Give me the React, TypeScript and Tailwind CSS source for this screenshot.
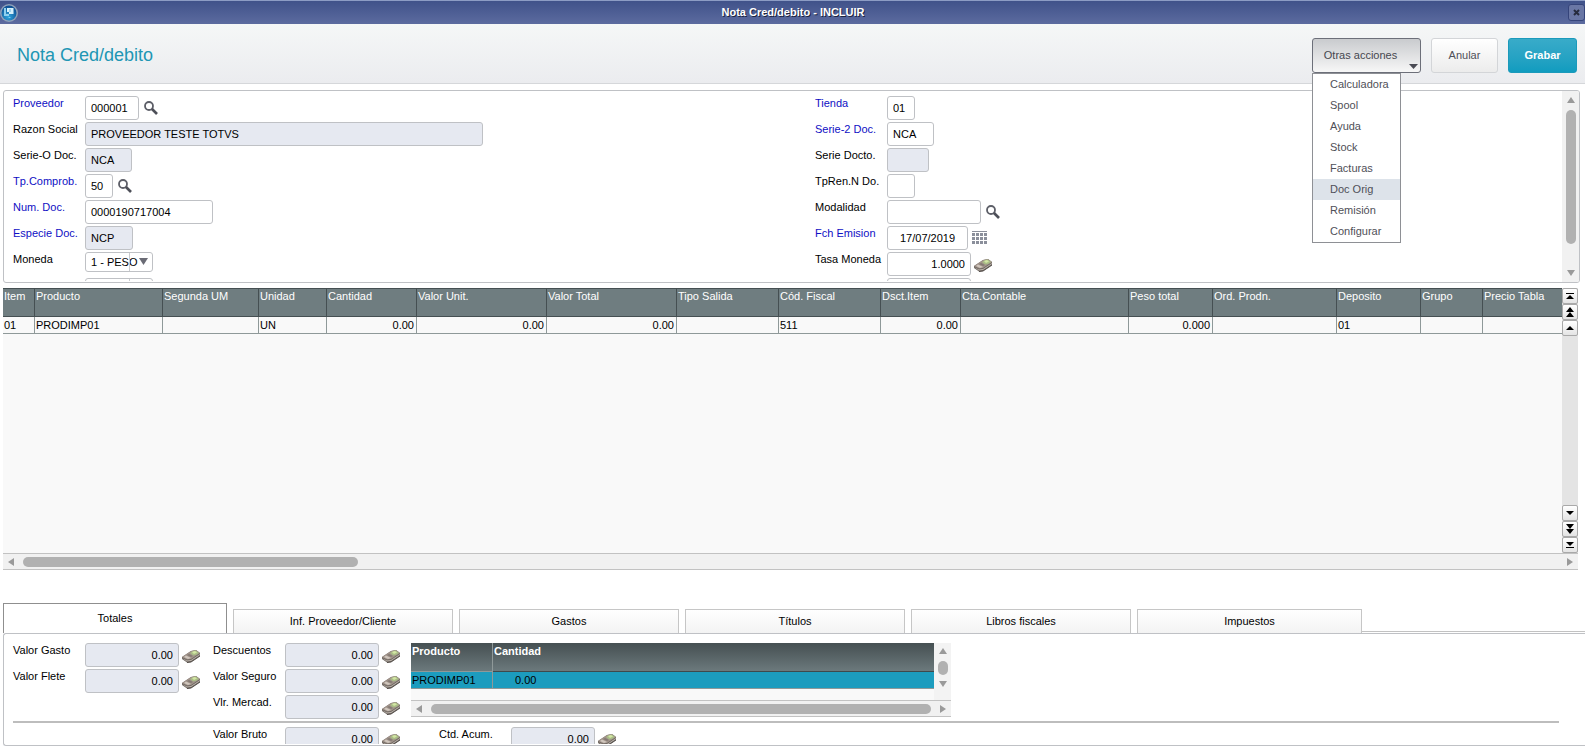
import { useState } from 'react';

const menuOptions = [
  'Calculadora',
  'Spool',
  'Ayuda',
  'Stock',
  'Facturas',
  'Doc Orig',
  'Remisión',
  'Configurar',
];

const tabs = ['Totales', 'Inf. Proveedor/Cliente', 'Gastos', 'Títulos', 'Libros fiscales', 'Impuestos'];

const columns = [
  { title: 'Item', width: 32, value: '01' },
  { title: 'Producto', width: 128, value: 'PRODIMP01' },
  { title: 'Segunda UM', width: 96, value: '' },
  { title: 'Unidad', width: 68, value: 'UN' },
  { title: 'Cantidad', width: 90, value: '0.00', number: true },
  { title: 'Valor Unit.', width: 130, value: '0.00', number: true },
  { title: 'Valor Total', width: 130, value: '0.00', number: true },
  { title: 'Tipo Salida', width: 102, value: '' },
  { title: 'Cód. Fiscal', width: 102, value: '511' },
  { title: 'Dsct.Item', width: 80, value: '0.00', number: true },
  { title: 'Cta.Contable', width: 168, value: '' },
  { title: 'Peso total', width: 84, value: '0.000', number: true },
  { title: 'Ord. Prodn.', width: 124, value: '' },
  { title: 'Deposito', width: 84, value: '01' },
  { title: 'Grupo', width: 62, value: '' },
  { title: 'Precio Tabla', width: 79, value: '' },
];

type FieldProps = {
  id: string;
  label: string;
  value?: string;
  width: string;
  required?: boolean;
  disabled?: boolean;
  align?: string;
  icon?: 'search' | 'calendar' | 'money';
};

function SearchIcon() {
  return (
    <svg width="14" height="14" viewBox="0 0 14 14" fill="none">
      <circle cx="5" cy="5" r="4" stroke="#5d5f68" strokeWidth="1.8" />
      <path d="M8 8l5 5" stroke="#4d4f58" strokeWidth="2.6" />
    </svg>
  );
}

function CalendarIcon() {
  return (
    <svg width="16" height="14" viewBox="0 0 16 14" fill="#8b8f9b">
      <path d="M0 0h15v1H0z" />
      {[2, 6, 10].map((y) => (
        <path key={y} d={`M0 ${y}h3v3H0zM4 ${y}h3v3H4zM8 ${y}h3v3H8zM12 ${y}h3v3h-3z`} />
      ))}
    </svg>
  );
}

function MoneyIcon() {
  return (
    <svg width="18" height="14" viewBox="0 0 18 14">
      <path d="M0 8l9-6 5-1 4 3v3l-9 6-4 .5L0 10z" fill="#6f6761" />
      <path d="M0 8l9-6 5-1 4 3-9 6-4 .5z" fill="#a0938a" />
      <path d="M8 4l3-2 3-.5 3 2.500-3 2-3 .5z" fill="#a9bd86" />
      <path d="M10 3l3-1 2 1.500-3 1.500z" fill="#d3e6a4" />
      <path d="M2 8l2-1.500 5 2.500-3 1z" fill="#d0c6bd" />
      <path d="M5 6l2-1 4 2-2 1z" fill="#857a73" />
      <path d="M0 9l5 2.500L9 11l9-6v1l-9 6-4 .5z" fill="#beb6ae" />
      <path d="M5 13l4-.5 9-6v1l-9 6-4 .5z" fill="#504a46" />
    </svg>
  );
}

function Logo() {
  return (
    <svg width="18" height="18" viewBox="0 0 18 18">
      <defs>
        <radialGradient id="logo" cx="45%" cy="75%" r="70%">
          <stop offset="0" stopColor="#2fa5dc" />
          <stop offset="1" stopColor="#0d4f93" />
        </radialGradient>
      </defs>
      <circle cx="9" cy="9" r="9" fill="#8fa0b8" />
      <circle cx="9" cy="9" r="7.500" fill="url(#logo)" />
      <path d="M4 4h2v6h3v2H4z" fill="#8fd0ee" />
      <path d="M7 4h6.500v6H9V8H7z" fill="#d4f0fb" />
      <path d="M9.500 5h1v3h-1z" fill="#5fb4de" />
      <path d="M8 14l1.500-1 1.500 1z" fill="#8fdcf7" />
    </svg>
  );
}

function Field({ id, label, value = '', width, required, disabled, align = 'text-left', icon }: FieldProps) {
  const [text, setText] = useState(value);

  return (
    <div className="flex h-[26px] items-start">
      <label htmlFor={id} className={`w-[72px] shrink-0 whitespace-nowrap leading-[14px] ${required ? 'text-[#0f0fc4]' : 'text-black'}`}>
        {label}
      </label>
      <input
        id={id}
        type="text"
        value={text}
        readOnly={disabled}
        onChange={(e) => setText(e.target.value)}
        className={`h-6 rounded-[3px] border border-[#bfc1c5] px-[5px] pb-px text-black outline-none ${width} ${align} ${disabled ? 'bg-[#e6e9f1]' : 'bg-white'}`}
      />
      {icon && (
        <button type="button" aria-label={`${label} ${icon}`} className={`flex h-6 items-center ${icon === 'search' ? 'pb-px pl-[5px]' : icon === 'calendar' ? 'pl-1' : 'pl-[3px] pt-[2px]'}`}>
          {icon === 'search' && <SearchIcon />}
          {icon === 'calendar' && <CalendarIcon />}
          {icon === 'money' && <MoneyIcon />}
        </button>
      )}
    </div>
  );
}

function SelectBox({ id, label, value }: { id: string; label: string; value: string }) {
  return (
    <div className="flex h-[26px] items-start">
      <label htmlFor={id} className="w-[72px] shrink-0 leading-[14px]">{label}</label>
      <div className="relative">
        <select id={id} className="h-5 w-[68px] appearance-none rounded-[3px] border border-[#bfc1c5] bg-white pl-[5px] leading-[18px] outline-none">
          <option>{value}</option>
        </select>
        <span className="pointer-events-none absolute left-11 top-px h-[18px] border-l border-[#c9cbcf]" />
        <svg className="pointer-events-none absolute right-[5px] top-[6px]" width="9" height="7" viewBox="0 0 9 7">
          <path d="M0 0h9L4.500 7z" fill="#6a6b75" />
        </svg>
      </div>
    </div>
  );
}

function Arrow({ dir }: { dir: 'up' | 'down' | 'left' | 'right' }) {
  const paths = {
    up: 'M0 7L4 1l4 6z',
    down: 'M0 1l4 6 4-6z',
    left: 'M7 0L1 4l6 4z',
    right: 'M1 0l6 4-6 4z',
  };
  return (
    <svg width="8" height="8" viewBox="0 0 8 8">
      <path d={paths[dir]} fill="#9a9a9a" />
    </svg>
  );
}

function StepButton({ label, d }: { label: string; d: string }) {
  return (
    <button type="button" aria-label={label} className="flex h-4 w-4 items-center justify-center rounded-[2px] border border-[#a9a9a9] bg-linear-to-b from-white to-[#e4e4e4]">
      <svg width="10" height="10" viewBox="0 0 10 10">
        <path d={d} fill="#000" />
      </svg>
    </button>
  );
}

export default function App() {
  const [open, setOpen] = useState(true);
  const [selected, setSelected] = useState('Doc Orig');
  const [activeTab, setActiveTab] = useState('Totales');

  return (
    <div className="min-h-[750px] overflow-hidden bg-white font-['Liberation_Sans',Arial,sans-serif] text-[11px] text-black">
      <div className="flex h-6 items-center border-t border-[#8c9cc4] bg-linear-to-b from-[#40528a] to-[#5c6b9f]">
        <Logo />
        <h1 className="flex-1 pb-px text-center font-bold text-white [text-shadow:1px_1px_0_#1d2440]">Nota Cred/debito - INCLUIR</h1>
        <button type="button" aria-label="Cerrar" className="flex h-[17px] w-[17px] items-center justify-center rounded-[3px] border border-[#35447a] bg-[#6a77a5]">
          <svg width="7" height="7" viewBox="0 0 7 7">
            <path d="M1 1l5 5M6 1L1 6" stroke="#262b3d" strokeWidth="2" />
          </svg>
        </button>
      </div>

      <header className="flex h-[60px] items-center justify-between border-b border-[#d5d7da] bg-linear-to-b from-[#f5f7f7] to-[#ebecef] pl-[17px] pr-2 pt-[3px]">
        <h2 className="text-lg text-[#2196b4]">Nota Cred/debito</h2>
        <div className="flex gap-[10px]">
          <div className="relative">
            <button
              type="button"
              onClick={() => setOpen(!open)}
              className="relative h-[35px] w-[109px] rounded-[3px] border border-[#6c6f79] bg-linear-to-b from-[#c9cbce] to-[#f7f7f7] pr-3 text-[#46474f]"
            >
              Otras acciones
              <svg className="absolute bottom-[3px] right-[2px]" width="9" height="5" viewBox="0 0 9 5">
                <path d="M0 0h9L4.500 5z" fill="#4a4b54" />
              </svg>
            </button>
            {open && (
              <ul className="absolute left-0 top-[35px] z-10 w-[89px] border border-[#8e9095] bg-white text-[#4f5058]">
                {menuOptions.map((option) => (
                  <li key={option}>
                    <button
                      type="button"
                      onClick={() => setSelected(option)}
                      className={`block h-[21px] w-full pl-[17px] text-left ${option === selected ? 'bg-[#dde3ea]' : ''}`}
                    >
                      {option}
                    </button>
                  </li>
                ))}
              </ul>
            )}
          </div>
          <button type="button" className="h-[35px] w-[67px] rounded-[3px] border border-[#d3d5d8] bg-linear-to-b from-white to-[#ececec] text-[#4f5058]">
            Anular
          </button>
          <button type="button" className="h-[35px] w-[69px] rounded-[3px] border border-[#1b9abb] bg-linear-to-b from-[#38abc9] to-[#109cbf] font-bold text-white">
            Grabar
          </button>
        </div>
      </header>

      <section className="ml-[3px] mr-[5px] mt-[6px] flex h-[193px] overflow-hidden rounded-[3px] border border-[#bfc1c5]">
        <div className="mb-px grid flex-1 grid-cols-[802px_1fr] overflow-hidden pl-[9px] pt-[5px]">
          <div>
            <Field id="proveedor" label="Proveedor" value="000001" width="w-[54px]" required icon="search" />
            <Field id="razon" label="Razon Social" value="PROVEEDOR TESTE TOTVS" width="w-[398px]" disabled />
            <Field id="serieO" label="Serie-O Doc." value="NCA" width="w-[47px]" disabled />
            <Field id="comprob" label="Tp.Comprob." value="50" width="w-[28px]" required icon="search" />
            <Field id="numDoc" label="Num. Doc." value="0000190717004" width="w-[128px]" required />
            <Field id="especie" label="Especie Doc." value="NCP" width="w-[48px]" required disabled />
            <SelectBox id="moneda" label="Moneda" value="1 - PESO" />
            <SelectBox id="extra" label="" value="" />
          </div>
          <div>
            <Field id="tienda" label="Tienda" value="01" width="w-[28px]" required />
            <Field id="serie2" label="Serie-2 Doc." value="NCA" width="w-[47px]" required />
            <Field id="serieDocto" label="Serie Docto." width="w-[42px]" disabled />
            <Field id="tpRen" label="TpRen.N Do." width="w-[28px]" />
            <Field id="modalidad" label="Modalidad" width="w-[94px]" icon="search" />
            <Field id="emision" label="Fch Emision" value="17/07/2019" width="w-[81px]" align="text-center" required icon="calendar" />
            <Field id="tasa" label="Tasa Moneda" value="1.0000" width="w-[84px]" align="text-right" icon="money" />
            <Field id="tasa2" label="" width="w-[84px]" />
          </div>
        </div>
        <div className="flex w-[17px] flex-col items-center gap-[6px] bg-[#f1f1f1] py-[5px]">
          <Arrow dir="up" />
          <div className="h-[134px] w-[10px] rounded-full bg-[#b1b1b1]" />
          <div className="mt-auto">
            <Arrow dir="down" />
          </div>
        </div>
      </section>

      <section className="ml-[3px] mr-[7px] mt-[5px]">
        <div className="flex h-[265px]">
          <div className="flex-1 overflow-hidden bg-[#f9f9f9]">
            <table className="w-full table-fixed border-separate border-spacing-0">
              <colgroup>
                {columns.map((col) => (
                  <col key={col.title} style={{ width: col.width }} />
                ))}
              </colgroup>
              <thead>
                <tr className="h-[29px] bg-[#6f7d80] text-left align-top text-white">
                  {columns.map((col) => (
                    <th key={col.title} className="whitespace-nowrap border-b border-r border-t border-[#454f52] pl-px pt-px font-normal leading-[13px] last:border-r-0">
                      {col.title}
                    </th>
                  ))}
                </tr>
              </thead>
              <tbody>
                <tr className="h-[17px]">
                  {columns.map((col) => (
                    <td key={col.title} className={`h-[17px] whitespace-nowrap border-b border-r border-[#8f9999] pl-px pr-[2px] leading-4 last:border-r-0 ${col.number ? 'text-right' : 'text-left'}`}>
                      {col.value}
                    </td>
                  ))}
                </tr>
              </tbody>
            </table>
          </div>
          <div className="flex w-4 flex-col bg-[#e4e4e4]">
            <StepButton label="Primero" d="M1 2h8v1H1zM5 4l4 4H1z" />
            <StepButton label="Página anterior" d="M5 0l4 5H1zM5 5l4 5H1z" />
            <StepButton label="Anterior" d="M5 3l4 4H1z" />
            <div className="flex-1" />
            <StepButton label="Siguiente" d="M5 7l4-4H1z" />
            <StepButton label="Página siguiente" d="M5 5l4-5H1zM5 10l4-5H1z" />
            <StepButton label="Último" d="M5 6l4-4H1zM1 7h8v1H1z" />
          </div>
        </div>
        <div className="flex h-[17px] items-center gap-2 border-y border-[#c2c2c2] bg-[#f1f1f1] px-1">
          <Arrow dir="left" />
          <div className="h-[10px] w-[335px] rounded-full bg-[#b1b1b1]" />
          <div className="ml-auto flex">
            <Arrow dir="right" />
          </div>
        </div>
      </section>

      <div role="tablist" className="ml-[3px] mt-[33px] flex h-[30px] items-end">
        {tabs.map((tab) => (
          <button
            key={tab}
            type="button"
            role="tab"
            aria-selected={tab === activeTab}
            onClick={() => setActiveTab(tab)}
            className={`mr-[6px] shrink-0 border border-b-0 last-of-type:mr-0 last-of-type:w-[225px] ${
              tab === activeTab ? 'h-[30px] w-[224px] border-[#8f8f8f] bg-white' : 'h-6 w-[220px] border-[#c6c6c6] bg-linear-to-b from-white to-[#f3f3f3]'
            }`}
          >
            {tab}
          </button>
        ))}
        <div className="h-[2px] flex-1 border-t border-[#c2c2c2]" />
      </div>

      <section className="ml-[3px] flex h-[113px] flex-col overflow-hidden rounded-l-[3px] border border-r-0 border-[#bfc1c5] pl-[9px] pt-[9px]">
        <div className="flex h-[78px] shrink-0 items-start">
          <div className="w-[200px]">
            <Field id="gasto" label="Valor Gasto" value="0.00" width="w-[94px]" align="text-right" disabled icon="money" />
            <Field id="flete" label="Valor Flete" value="0.00" width="w-[94px]" align="text-right" disabled icon="money" />
          </div>
          <div className="w-[198px]">
            <Field id="descuentos" label="Descuentos" value="0.00" width="w-[94px]" align="text-right" disabled icon="money" />
            <Field id="seguro" label="Valor Seguro" value="0.00" width="w-[94px]" align="text-right" disabled icon="money" />
            <Field id="mercad" label="Vlr. Mercad." value="0.00" width="w-[94px]" align="text-right" disabled icon="money" />
          </div>
          <div className="w-[540px]">
            <div className="flex h-[57px] bg-[#f9f9f9]">
              <table className="h-[46px] flex-1 table-fixed border-separate border-spacing-0">
                <colgroup>
                  <col className="w-[82px]" />
                  <col />
                </colgroup>
                <thead>
                  <tr className="h-[29px] bg-linear-to-b from-[#465052] to-[#6d7b7e] text-left align-top font-bold text-white">
                    <th className="border-b border-r border-[#8f9999] pl-px pt-[2px] leading-[13px]">Producto</th>
                    <th className="border-b border-[#3f494c] pl-px pt-[2px] leading-[13px]">Cantidad</th>
                  </tr>
                </thead>
                <tbody>
                  <tr className="h-[17px] bg-[#1c9cbe]">
                    <td className="border-b border-r border-[#8f9999] pl-px leading-4">PRODIMP01</td>
                    <td className="border-b border-[#8f9999] pl-[22px] leading-4">0.00</td>
                  </tr>
                </tbody>
              </table>
              <div className="flex w-[17px] flex-col items-center justify-between bg-[#f3f3f3] pb-3 pt-1">
                <Arrow dir="up" />
                <div className="h-[14px] w-[10px] rounded-full bg-[#b1b1b1]" />
                <Arrow dir="down" />
              </div>
            </div>
            <div className="flex h-[17px] items-center gap-2 border-y border-[#c2c2c2] bg-[#f1f1f1] px-1">
              <Arrow dir="left" />
              <div className="h-[10px] flex-1 rounded-full bg-[#b1b1b1]" />
              <Arrow dir="right" />
            </div>
          </div>
        </div>
        <hr className="mr-[26px] h-[2px] shrink-0 border-0 bg-[#bdbdbd]" />
        <div className="mb-px mt-1 flex min-h-0 flex-1 overflow-hidden pl-[200px]">
          <div className="w-[226px]">
            <Field id="bruto" label="Valor Bruto" value="0.00" width="w-[94px]" align="text-right" disabled icon="money" />
          </div>
          <Field id="acum" label="Ctd. Acum." value="0.00" width="w-[84px]" align="text-right" disabled icon="money" />
        </div>
      </section>
    </div>
  );
}
